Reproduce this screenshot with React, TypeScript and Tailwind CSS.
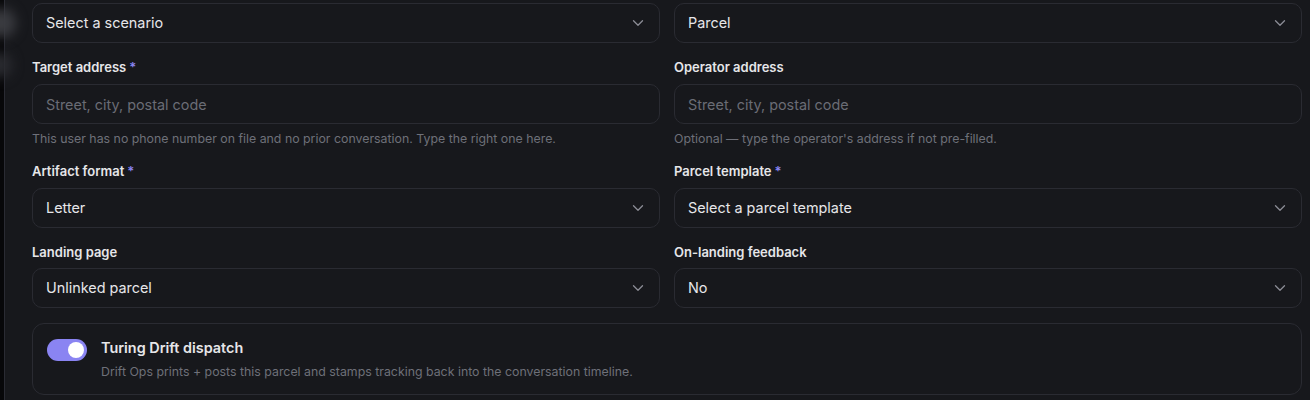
import { ChevronDown } from 'lucide-react'

type SelectProps = { value: string }

const Select = ({ value }: SelectProps) => (
    <button
        type="button"
        className="flex h-10 w-full items-center justify-between rounded-[10px] border border-[#2a2b32] bg-[#17181c] pl-[13px] pr-3 text-left text-[14.4px] text-[#e6e6e9]"
    >
        <span>{value}</span>
        <ChevronDown size={18} strokeWidth={1.75} className="text-[#8b8c95]" />
    </button>
)

const Label = ({ text, required }: { text: string; required?: boolean }) => (
    <label className="mb-2 block h-[18px] text-[13px] font-semibold leading-[18px] text-[#e6e6e9]">
        {text}
        {required && <span className="ml-[3px] text-[#8a84f2]">*</span>}
    </label>
)

const AddressInput = ({ help }: { help: string }) => (
    <div>
        <input
            type="text"
            placeholder="Street, city, postal code"
            className="h-10 w-full rounded-[10px] border border-[#2a2b32] bg-[#17181c] px-[13px] text-[14.4px] text-[#e6e6e9] placeholder:text-[#6a6c75] focus:outline-none"
        />
        <p className="mt-[6px] text-[12.35px] leading-[17px] text-[#6e7079]">{help}</p>
    </div>
)

export default function App() {
    return (
        <div
            className="flex h-[400px] w-full overflow-hidden bg-[#070709]"
            style={{ fontFamily: 'Inter, "Noto Sans", sans-serif' }}
        >
            {/* blurred backdrop peeking out behind the drawer */}
            <div className="relative w-[4px] shrink-0">
                <div className="absolute -left-[14px] top-[8px] h-[30px] w-[30px] rounded-full bg-[#3a3b40] blur-[6px]" />
                <div className="absolute -left-[14px] top-[52px] h-[26px] w-[26px] rounded-full bg-[#2a2b30] blur-[6px]" />
            </div>

            <div className="flex-1 border-l border-[#2a2b33] bg-[#17181c] pl-[27px] pr-2 pt-[3px]">
                <div className="grid grid-cols-2 gap-x-[14px] gap-y-[15px]">
                    <Select value="Select a scenario" />
                    <Select value="Parcel" />

                    <div>
                        <Label text="Target address" required />
                        <AddressInput help="This user has no phone number on file and no prior conversation. Type the right one here." />
                    </div>
                    <div>
                        <Label text="Operator address" />
                        <AddressInput help="Optional — type the operator's address if not pre-filled." />
                    </div>

                    <div>
                        <Label text="Artifact format" required />
                        <Select value="Letter" />
                    </div>
                    <div>
                        <Label text="Parcel template" required />
                        <Select value="Select a parcel template" />
                    </div>

                    <div>
                        <Label text="Landing page" />
                        <div className="-mt-px">
                            <Select value="Unlinked parcel" />
                        </div>
                    </div>
                    <div>
                        <Label text="On-landing feedback" />
                        <div className="-mt-px">
                            <Select value="No" />
                        </div>
                    </div>
                </div>

                <div className="mt-[15px] flex h-[72px] items-start gap-[14px] rounded-xl border border-[#2a2b32] bg-[#17181c] px-[14px] pt-[14px]">
                    <button
                        type="button"
                        className="mt-[1px] flex h-[22px] w-10 shrink-0 items-center justify-end rounded-full bg-[#8a84f2] px-[3px]"
                    >
                        <span className="h-4 w-4 rounded-full bg-white" />
                    </button>
                    <div>
                        <div className="text-[14.4px] font-semibold leading-5 text-[#e6e6e9]">Turing Drift dispatch</div>
                        <div className="mt-[6px] text-[12.35px] leading-4 text-[#6e7079]">
                            Drift Ops prints + posts this parcel and stamps tracking back into the conversation timeline.
                        </div>
                    </div>
                </div>
            </div>
        </div>
    )
}
